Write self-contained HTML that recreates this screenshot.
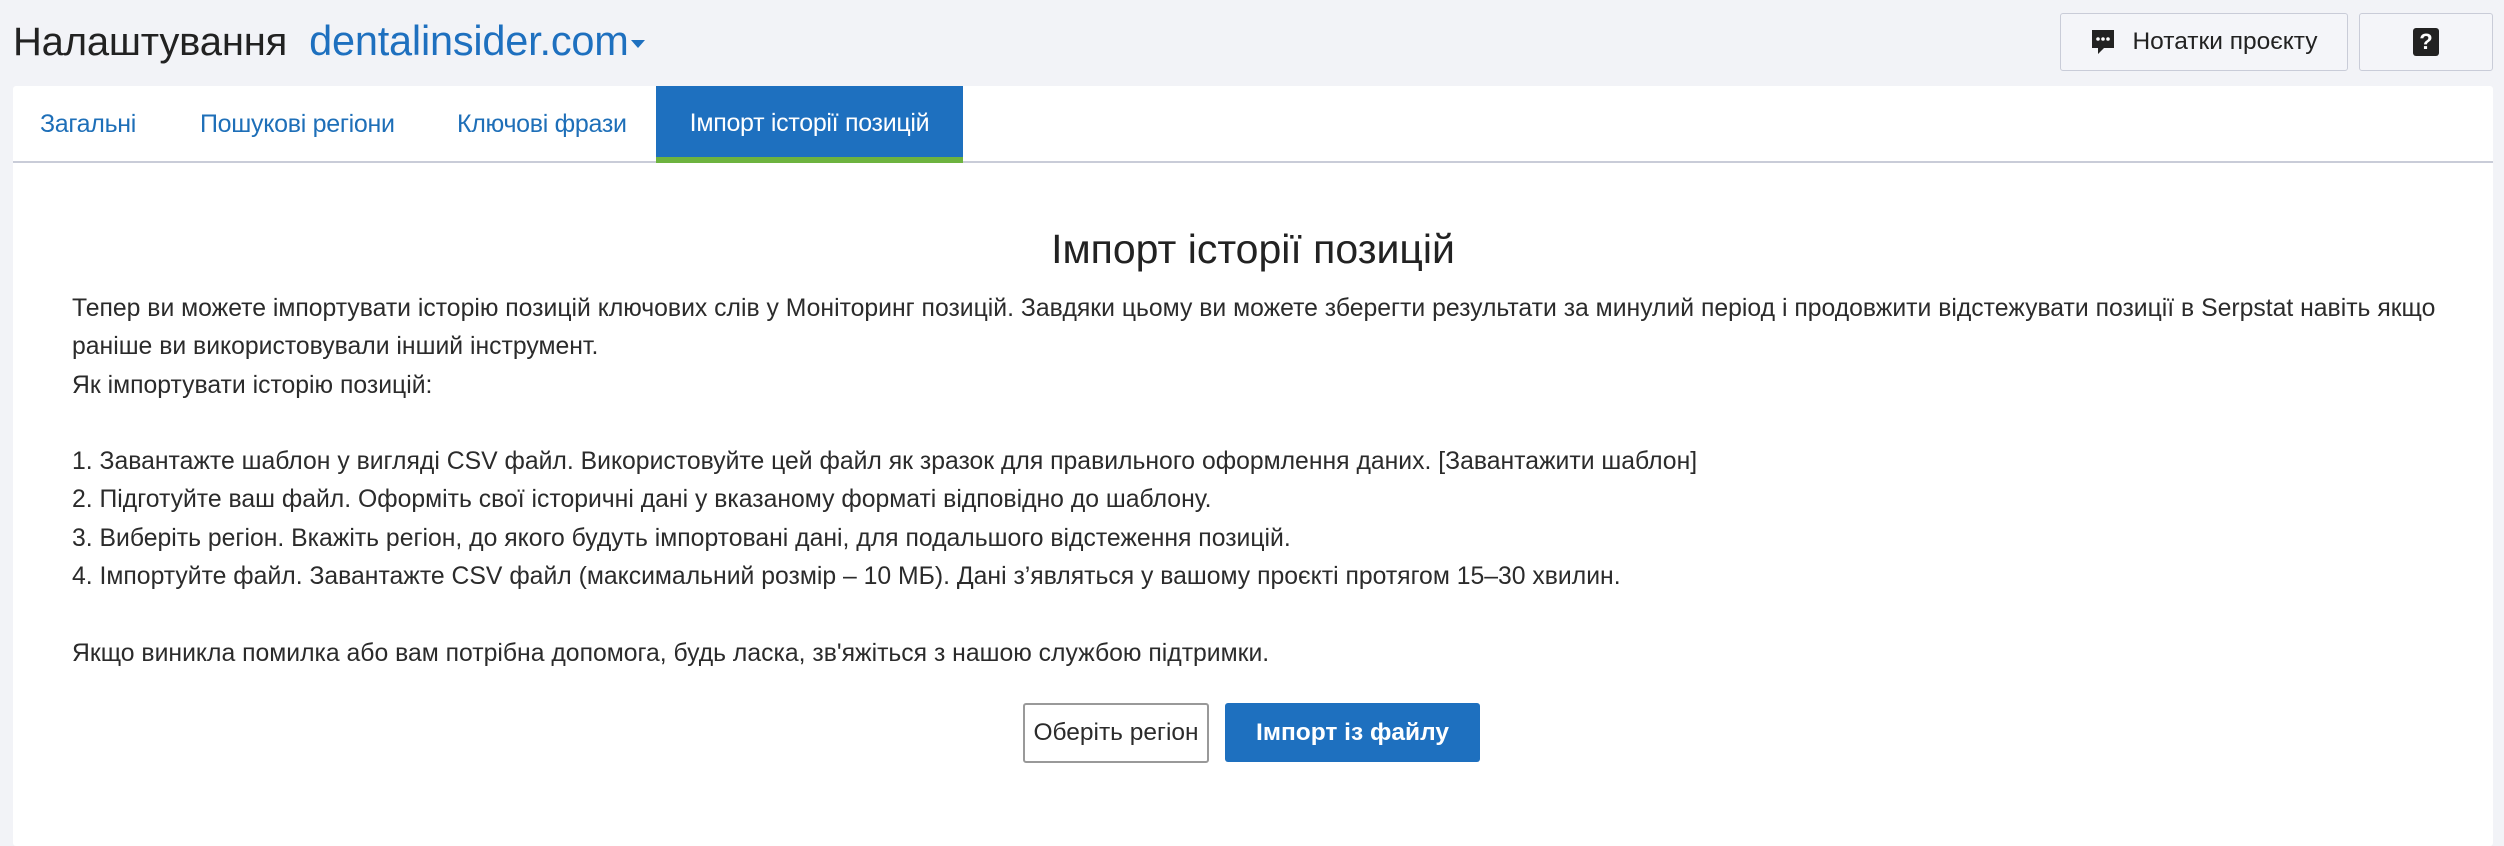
<!DOCTYPE html>
<html><head><meta charset="utf-8"><style>
*{margin:0;padding:0;box-sizing:border-box}
body{width:2504px;height:838px;background:#f2f3f7;font-family:"Liberation Sans",sans-serif;color:#2b2b2b;position:relative;overflow:hidden}
.title{position:absolute;left:13px;top:17px;font-size:40px;color:#222;white-space:nowrap;letter-spacing:-0.2px}
.title span{color:#1e70bf;margin-left:22px;font-size:41.5px}
.caret{display:inline-block;width:0;height:0;border-left:7px solid transparent;border-right:7px solid transparent;border-top:8px solid #1e70bf;vertical-align:middle;margin-left:2px}
.tb{position:absolute;top:13px;height:58px;border:1.5px solid #c9ccd8;border-radius:3px;background:#f4f5f9;display:flex;align-items:center;justify-content:center;font-size:24.5px;color:#222}
.card{position:absolute;left:13px;top:86px;width:2480px;height:760px;background:#fff;border-radius:3px}
.tabs{height:77px;border-bottom:2px solid #c9ccd8;position:relative}
.tab{position:absolute;top:0;height:77px;line-height:77px;font-size:25px;color:#1e6fb8;letter-spacing:-0.3px}
.tab.act{background:#1e70bf;color:#fff;left:643px;width:307px;text-align:center;border-bottom:6px solid #6db33f;line-height:74px}
h1{position:absolute;top:140px;left:0;width:100%;text-align:center;font-weight:normal;font-size:41px;color:#222}
.txt{position:absolute;left:59px;top:204px;font-size:24.75px;line-height:38.3px;color:#2b2b2b;white-space:nowrap;letter-spacing:0px}
.b1{position:absolute;left:1023px;top:703px;width:186px;height:60px;border:2px solid #999;border-radius:3px;font-size:24.5px;display:flex;align-items:center;justify-content:center;color:#2b2b2b}
.b2{position:absolute;left:1225px;top:703px;width:255px;height:59px;background:#1e70bf;border-radius:3px;color:#fff;font-size:24.5px;font-weight:bold;display:flex;align-items:center;justify-content:center}
</style></head><body>
<div class="title">Налаштування<span>dentalinsider.com</span><i class="caret"></i></div>
<div class="tb" style="left:2060px;width:288px"><svg width="26" height="28" viewBox="0 0 26 28" style="margin-right:16px"><path d="M2 2h22v18H14l-6 6v-6H2z" fill="#222"/><circle cx="8" cy="11" r="1.8" fill="#fff"/><circle cx="13" cy="11" r="1.8" fill="#fff"/><circle cx="18" cy="11" r="1.8" fill="#fff"/></svg>Нотатки проєкту</div>
<div class="tb" style="left:2359px;width:134px"><div style="width:26px;height:28px;background:#222;border-radius:3px;color:#fff;font-weight:bold;font-size:22px;text-align:center;line-height:28px">?</div></div>
<div class="card">
<div class="tabs">
<div class="tab" style="left:27px">Загальні</div>
<div class="tab" style="left:187px">Пошукові регіони</div>
<div class="tab" style="left:444px">Ключові фрази</div>
<div class="tab act">Імпорт історії позицій</div>
</div>
<h1>Імпорт історії позицій</h1>
<div class="txt">Тепер ви можете імпортувати історію позицій ключових слів у Моніторинг позицій. Завдяки цьому ви можете зберегти результати за минулий період і продовжити відстежувати позиції в Serpstat навіть якщо<br>раніше ви використовували інший інструмент.<br>Як імпортувати історію позицій:<br><br>1. Завантажте шаблон у вигляді CSV файл. Використовуйте цей файл як зразок для правильного оформлення даних. [Завантажити шаблон]<br>2. Підготуйте ваш файл. Оформіть свої історичні дані у вказаному форматі відповідно до шаблону.<br>3. Виберіть регіон. Вкажіть регіон, до якого будуть імпортовані дані, для подальшого відстеження позицій.<br>4. Імпортуйте файл. Завантажте CSV файл (максимальний розмір – 10 МБ). Дані з’являться у вашому проєкті протягом 15–30 хвилин.<br><br>Якщо виникла помилка або вам потрібна допомога, будь ласка, зв'яжіться з нашою службою підтримки.</div>
</div>
<div class="b1">Оберіть регіон</div>
<div class="b2">Імпорт із файлу</div>
</body></html>
